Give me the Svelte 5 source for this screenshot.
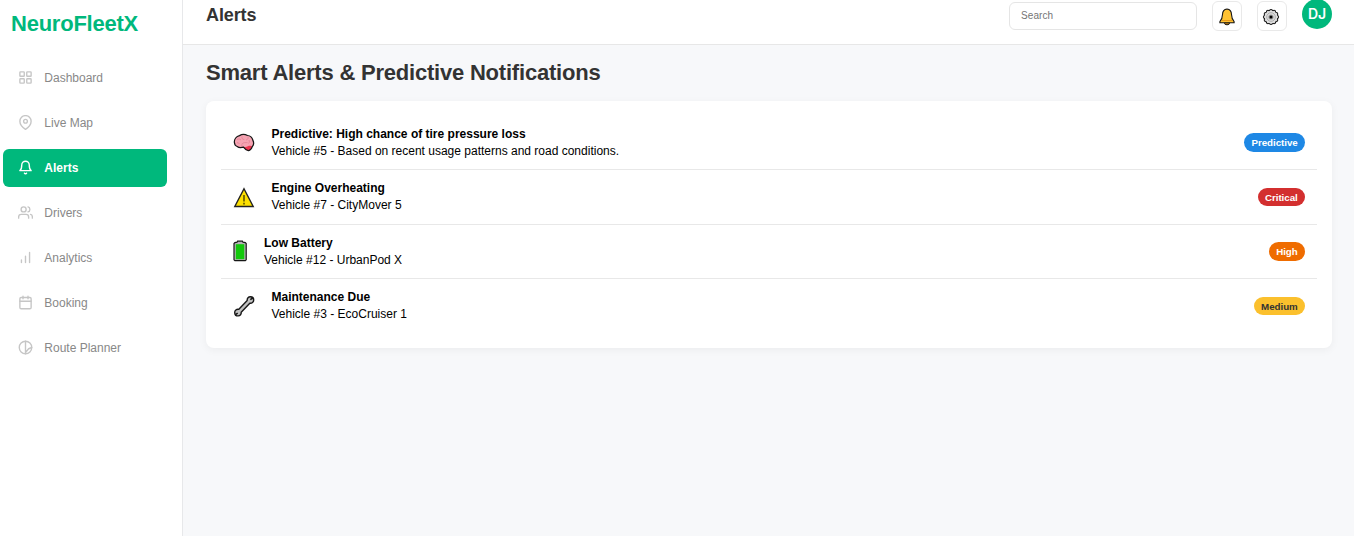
<script>
  const nav = [
    { label: 'Dashboard', icon: 'grid' },
    { label: 'Live Map', icon: 'pin' },
    { label: 'Alerts', icon: 'bell', active: true },
    { label: 'Drivers', icon: 'users' },
    { label: 'Analytics', icon: 'bars' },
    { label: 'Booking', icon: 'calendar' },
    { label: 'Route Planner', icon: 'route' }
  ];
  const alerts = [
    { icon: 'brain', title: 'Predictive: High chance of tire pressure loss', detail: 'Vehicle #5 - Based on recent usage patterns and road conditions.', level: 'Predictive' },
    { icon: 'warning', title: 'Engine Overheating', detail: 'Vehicle #7 - CityMover 5', level: 'Critical' },
    { icon: 'battery', title: 'Low Battery', detail: 'Vehicle #12 - UrbanPod X', level: 'High' },
    { icon: 'wrench', title: 'Maintenance Due', detail: 'Vehicle #3 - EcoCruiser 1', level: 'Medium' }
  ];
  const teeth = Array.from({ length: 12 }, (_, i) => {
    const a = (i * Math.PI) / 6;
    return { x: 9 + 6.1 * Math.cos(a), y: 9 + 6.1 * Math.sin(a) };
  });
</script>

<div class="app">
  <aside>
    <div class="logo">NeuroFleetX</div>
    <nav>
      {#each nav as item}
        <a class:active={item.active}>
          <svg class="nav-icon" viewBox="0 0 24 24">
            {#if item.icon === 'grid'}
              <rect x="3" y="3" width="7" height="7" rx="1" /><rect x="14" y="3" width="7" height="7" rx="1" /><rect x="14" y="14" width="7" height="7" rx="1" /><rect x="3" y="14" width="7" height="7" rx="1" />
            {:else if item.icon === 'pin'}
              <path d="M21 10c0 7-9 13-9 13S3 17 3 10a9 9 0 0 1 18 0z" /><circle cx="12" cy="10" r="3" />
            {:else if item.icon === 'bell'}
              <path d="M18 8A6 6 0 0 0 6 8c0 7-3 9-3 9h18s-3-2-3-9M13.73 21a2 2 0 0 1-3.46 0" />
            {:else if item.icon === 'users'}
              <path d="M17 21v-2a4 4 0 0 0-4-4H5a4 4 0 0 0-4 4v2M23 21v-2a4 4 0 0 0-3-3.87M16 3.13a4 4 0 0 1 0 7.75" /><circle cx="9" cy="7" r="4" />
            {:else if item.icon === 'bars'}
              <path d="M12 20V10M18.500 20V4M5.500 20v-4" />
            {:else if item.icon === 'calendar'}
              <rect x="3" y="4" width="18" height="18" rx="2" /><path d="M16 2v4M8 2v4M3 10h18" />
            {:else}
              <circle cx="12" cy="12" r="10" /><path d="M12 2v20M12 20l5-6 5-2" />
            {/if}
          </svg>
          <span>{item.label}</span>
        </a>
      {/each}
    </nav>
  </aside>

  <main>
    <header>
      <h1>Alerts</h1>
      <div class="tools">
        <input type="text" placeholder="Search" />
        <button aria-label="Notifications">
          <svg width="16" height="18" viewBox="0 0 16 18">
            <ellipse cx="8" cy="15.2" rx="2.5" ry="1.6" fill="#c98212" stroke="#151515" />
            <path d="M8 1c-3 .4-4.400 2.500-4.500 5.400-.1 3.800-.7 5-2.600 7.200v1.100h14.200v-1.100c-1.900-2.200-2.500-3.400-2.600-7.200C12.400 3.500 11 1.400 8 1z" fill="#ffc233" stroke="#151515" stroke-width="1.100" />
            <path d="M3 12.500h10" stroke="#e7991c" />
          </svg>
        </button>
        <button aria-label="Settings" class="settings">
          <svg width="18" height="18" viewBox="0 0 18 18">
            {#each teeth as t}<circle cx={t.x} cy={t.y} r="2" fill="#111" />{/each}
            {#each teeth as t}<circle cx={t.x} cy={t.y} r="1" fill="#d2d2d2" />{/each}
            <circle cx="9" cy="9" r="6.300" fill="#dedede" />
            <circle cx="9" cy="9" r="4.300" fill="#dedede" stroke="#a0a0a0" stroke-width=".8" />
            <circle cx="9" cy="9" r="2.600" fill="#999" />
            <circle cx="9" cy="9" r="1.500" fill="#000" />
          </svg>
        </button>
        <div class="avatar">DJ</div>
      </div>
    </header>

    <section>
      <h2>Smart Alerts &amp; Predictive Notifications</h2>
      <div class="card">
        {#each alerts as alert}
          <div class="row">
            <div class="symbol {alert.icon}">
              {#if alert.icon === 'brain'}
                <svg width="22" height="22" viewBox="0 0 22 22">
                  <path d="M1.400 10.500C1 7.300 3.500 4.500 6.500 3.600c2.500-1.500 5.500-1.400 8-.1 2.700.2 4.700 2 5.300 4.600 1.200 2.300 1.100 4.700-.5 6.500-.7 2-1.900 3.700-3.700 4-2 .2-3.800-1.600-5.100-3.400-2.700.7-4.900.5-6.300-.7-1.700-.6-2.700-2.100-2.800-4z" fill="#f5a3b2" />
                  <path d="M10.500 15.200c2.200.3 3.700-.8 5.500-1.400 1.300-.4 2.300-.1 3.300.8-.7 2-1.900 3.700-3.700 4-2 .2-3.800-1.600-5.100-3.400z" fill="#ec3450" />
                  <path d="M1.400 10.500C1 7.300 3.500 4.500 6.500 3.600c2.500-1.500 5.500-1.400 8-.1 2.700.2 4.700 2 5.300 4.600 1.200 2.300 1.100 4.700-.5 6.500-.7 2-1.900 3.700-3.700 4-2 .2-3.800-1.600-5.100-3.400-2.700.7-4.900.5-6.300-.7-1.700-.6-2.700-2.100-2.800-4z" fill="none" stroke="#161616" stroke-width="1.250" />
                  <path d="M4 7.500c1.600-1 3-.5 4 .6M9 4.500c-.5 1.800.5 3 2.300 3M15 4.500c.4 2-.3 3-1.800 3.500M9 14c-.7-1.800.4-3 2.500-3.400h3M16 8c.7 1.600.5 2.500-.5 3.500M4 10.500l2.500 1" fill="none" stroke="#df8294" stroke-width=".8" />
                </svg>
              {:else if alert.icon === 'warning'}
                <svg width="22" height="22" viewBox="0 0 22 22">
                  <path d="M11 2.800L20.200 20.500H1.800z" fill="#fde000" stroke="#222" stroke-width="1.400" />
                  <path d="M11 9v6.500M11 16.800v1.700" stroke="#4a4200" stroke-width="1.400" />
                </svg>
              {:else if alert.icon === 'battery'}
                <svg width="14" height="22" viewBox="0 0 14 22">
                  <path d="M4 2.200l.6-1h4.800l.6 1 2.300.4.900 1v16.200l-.9.900H1.900l-.9-.9V3.600l.9-1z" fill="#b6b6b6" stroke="#161616" stroke-width="1.200" />
                  <path d="M2.800 4.200h8.500v15H2.800z" fill="#12c80b" />
                </svg>
              {:else}
                <svg width="22" height="22" viewBox="0 0 22 22">
                  <path d="M17.500 1.800c-2-.1-3.600 1.600-3.300 3.600l-8.600 9c-2.100-.4-3.900 1-3.900 3 0 2.100 1.400 3.500 3.400 3.500 2.100 0 3.400-1.700 3.100-3.700l8.600-9c2.100.3 3.900-1.100 3.900-3.200 0-1.800-1.300-3.100-3.200-3.200z" fill="#c2c2c2" stroke="#171717" stroke-width="1.400" stroke-linejoin="round" />
                  <path d="M17.300 4.600l2.600-1.700M4.700 18.100l-2.300 1.500" stroke="#171717" stroke-width="1.700" />
                </svg>
              {/if}
            </div>
            <div class="copy">
              <strong>{alert.title}</strong>
              <p>{alert.detail}</p>
            </div>
            <span class="badge {alert.level.toLowerCase()}">{alert.level}</span>
          </div>
        {/each}
      </div>
    </section>
  </main>
</div>

<style>
  :global(body) { margin: 0; overflow: hidden; }
  * { box-sizing: border-box; }
  .app { display: flex; height: 536px; font-family: "Liberation Sans", Arial, sans-serif; font-size: 12px; background: #f7f8fa; }
  aside { width: 183px; flex: none; background: #fff; border-right: 1px solid #e7e8ea; }
  .logo { padding: 11px 11px 0; height: 59px; font-size: 22px; line-height: 26px; font-weight: bold; letter-spacing: -.23px; color: #00b87c; }
  nav { display: flex; flex-direction: column; gap: 7px; padding: 0 15px 0 3px; }
  nav a { display: flex; align-items: center; height: 38px; padding-left: 15px; gap: 11px; border-radius: 6px; color: #888; }
  nav a span { padding-left: .3px; }
  .nav-icon { width: 15px; height: 15px; margin-bottom: 1px; fill: none; stroke: #c6c6c6; stroke-width: 2.2; stroke-linecap: round; stroke-linejoin: round; }
  nav .active { background: #00b87c; color: #fff; font-weight: bold; }
  .active .nav-icon { stroke: #fff; }
  main { flex: 1; min-width: 0; }
  header { height: 45px; display: flex; justify-content: space-between; align-items: flex-start; background: #fff; border-bottom: 1px solid #e7e7e7; padding: 0 22px 0 23px; }
  h1 { margin: 5px 0 0; font-size: 18px; line-height: 21px; letter-spacing: -.1px; color: #333; }
  .tools { display: flex; align-items: flex-start; gap: 15px; }
  input { width: 188px; height: 28px; margin: 2px 0 0; border: 1px solid #e5e5e5; border-radius: 6px; padding: 0 11px 1px; font: 10px "Liberation Sans", Arial, sans-serif; letter-spacing: .1px; background: #fff; outline: none; }
  input::placeholder { color: #757575; opacity: 1; }
  button { display: flex; align-items: center; justify-content: center; width: 30px; height: 30px; margin: 1px 0 0; padding: 2px 0 0; background: #fff; border: 1px solid #e9e9e9; border-radius: 6px; }
  .settings { padding-right: 2px; }
  .avatar { width: 30px; height: 30px; margin-top: -1px; border-radius: 50%; background: #00b87c; color: #fff; font: 600 14px/30px Inter, sans-serif; text-align: center; }
  section { padding: 15px 22px 0 23px; }
  h2 { margin: 0 0 15px; font-size: 22px; line-height: 26px; letter-spacing: -.21px; color: #333; }
  .card { height: 247px; padding: 15px; background: #fff; border-radius: 8px; box-shadow: 0 2px 8px rgba(0, 0, 0, .05); }
  .row { display: flex; align-items: center; height: 54.4px; padding: 0 12px; border-bottom: 1px solid #e8e8e8; }
  .row:last-child { border-bottom: 0; height: 53.4px; }
  .symbol { display: flex; width: 23.5px; height: 22px; margin-right: 15px; }
  .symbol.battery { width: 16px; }
  .copy { flex: 1; padding-top: .4px; line-height: 17px; color: #000; }
  .copy strong { display: block; }
  .copy p { margin: 0; }
  .badge { height: 18.5px; padding: 0 7.3px; border-radius: 10px; font-size: 9.75px; line-height: 19px; font-weight: bold; letter-spacing: -.04px; color: #fff; }
  .predictive { background: #1e88e5; }
  .critical { background: #d32f2f; }
  .high { background: #ef6c00; }
  .medium { background: #fbc02d; color: #333; }
</style>
